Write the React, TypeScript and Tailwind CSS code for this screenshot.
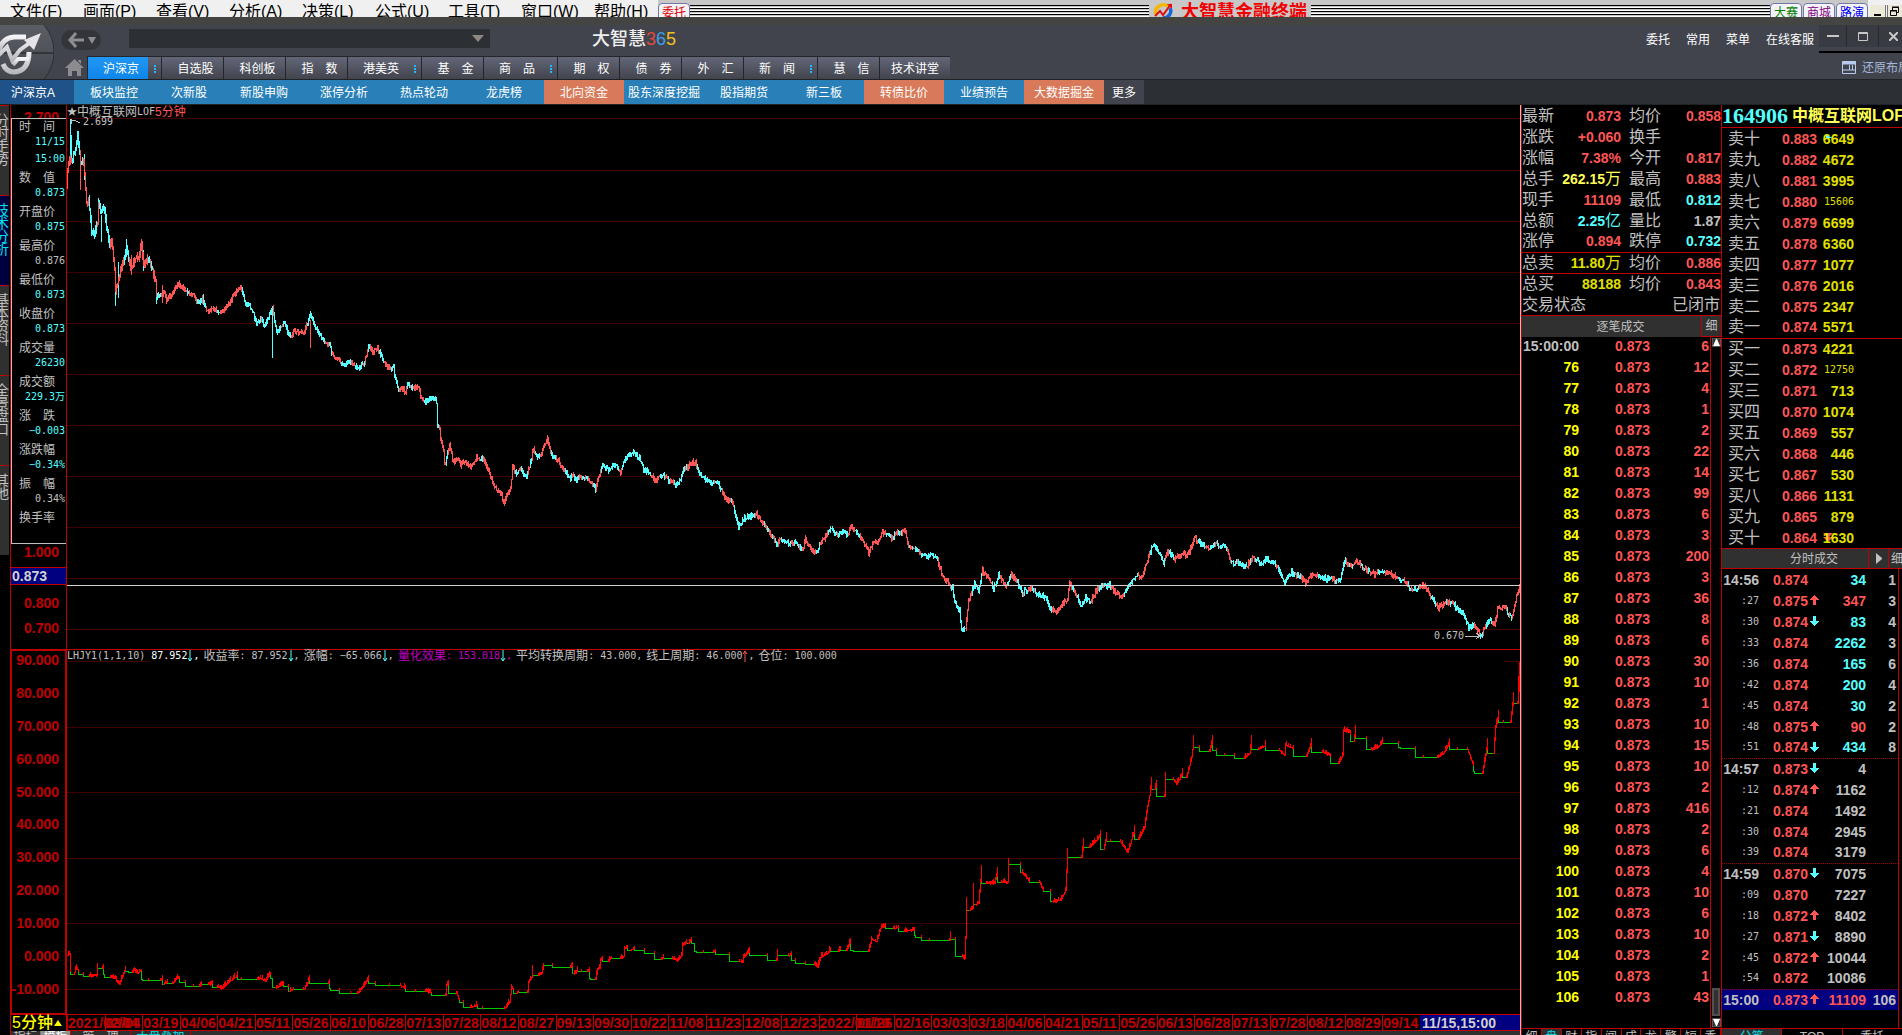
import { useState } from 'react';
import clsx from 'clsx';

const cjk = "font-['Liberation_Sans','Noto_Sans_CJK_SC',sans-serif]";
const mono = "font-['DejaVu_Sans_Mono','Noto_Sans_CJK_SC',monospace]";

const menus = ['文件(F)', '画面(P)', '查看(V)', '分析(A)', '决策(L)', '公式(U)', '工具(T)', '窗口(W)', '帮助(H)'];

const tabs = [
    { name: '沪深京', dots: true },
    { name: '自选股' },
    { name: '科创板' },
    { name: '指　数' },
    { name: '港美英', dots: true },
    { name: '基　金' },
    { name: '商　品', dots: true },
    { name: '期　权' },
    { name: '债　券' },
    { name: '外　汇' },
    { name: '新　闻', dots: true },
    { name: '慧　信' },
    { name: '技术讲堂' },
];

const subTabs = ['板块监控', '次新股', '新股申购', '涨停分析', '热点轮动', '龙虎榜', '北向资金', '股东深度挖掘', '股指期货', '新三板', '转债比价', '业绩预告', '大数据掘金'];
const hotTabs = ['北向资金', '转债比价', '大数据掘金'];

const sideTabs = ['分时走势', '技术分析', '基本资料', '全景盘口', '其他'];

const info = [
    { label: '时　间', values: ['11/15', '15:00'] },
    { label: '数　值', values: ['0.873'] },
    { label: '开盘价', values: ['0.875'] },
    { label: '最高价', values: ['0.876'], grey: true },
    { label: '最低价', values: ['0.873'] },
    { label: '收盘价', values: ['0.873'] },
    { label: '成交量', values: ['26230'] },
    { label: '成交额', values: ['229.3万'] },
    { label: '涨　跌', values: ['−0.003'] },
    { label: '涨跌幅', values: ['−0.34%'] },
    { label: '振　幅', values: ['0.34%'], grey: true },
    { label: '换手率', values: [] },
];

const dates = [
    '2021/02/04', '03/04', '03/19', '04/06', '04/21', '05/11', '05/26', '06/10', '06/28', '07/13', '07/28', '08/12',
    '08/27', '09/13', '09/30', '10/22', '11/08', '11/23', '12/08', '12/23', '2022/01/10', '01/26', '02/16', '03/03',
    '03/18', '04/06', '04/21', '05/11', '05/26', '06/13', '06/28', '07/13', '07/28', '08/12', '08/29', '09/14',
];

const RED = 'text-[#ff5555]';
const CYAN = 'text-[#55ffff]';
const YELLOW = 'text-[#e0e000]';
const GREY = 'text-[#c0c0c0]';

const summary = [
    ['最新', '0.873', RED, '均价', '0.858', RED],
    ['涨跌', '+0.060', RED, '换手', '', RED],
    ['涨幅', '7.38%', RED, '今开', '0.817', RED],
    ['总手', '262.15万', 'text-[#ffff55]', '最高', '0.883', RED],
    ['现手', '11109', RED, '最低', '0.812', CYAN],
    ['总额', '2.25亿', CYAN, '量比', '1.87', GREY],
    ['涨停', '0.894', RED, '跌停', '0.732', CYAN],
    ['总卖', '11.80万', YELLOW, '均价', '0.886', RED],
    ['总买', '88188', YELLOW, '均价', '0.843', RED],
];

const tickVolumes = [6, 12, 4, 1, 2, 22, 14, 99, 6, 3, 200, 3, 36, 8, 6, 30, 10, 1, 10, 15, 10, 2, 416, 2, 6, 4, 10, 6, 10, 2, 1, 43];

const sells = [
    ['卖十', '0.883', '6649'], ['卖九', '0.882', '4672'], ['卖八', '0.881', '3995'], ['卖七', '0.880', '15606'],
    ['卖六', '0.879', '6699'], ['卖五', '0.878', '6360'], ['卖四', '0.877', '1077'], ['卖三', '0.876', '2016'],
    ['卖二', '0.875', '2347'], ['卖一', '0.874', '5571'],
];
const buys = [
    ['买一', '0.873', '4221'], ['买二', '0.872', '12750'], ['买三', '0.871', '713'], ['买四', '0.870', '1074'],
    ['买五', '0.869', '557'], ['买六', '0.868', '446'], ['买七', '0.867', '530'], ['买八', '0.866', '1131'],
    ['买九', '0.865', '879'], ['买十', '0.864', '1630'],
];

// time, price, direction, volume, volume colour, count
const trades = [
    ['14:56', '0.874', '', '34', CYAN, '1'],
    [':27', '0.875', 'up', '347', RED, '3'],
    [':30', '0.874', 'down', '83', CYAN, '4'],
    [':33', '0.874', '', '2262', CYAN, '3'],
    [':36', '0.874', '', '165', CYAN, '6'],
    [':42', '0.874', '', '200', CYAN, '4'],
    [':45', '0.874', '', '30', CYAN, '2'],
    [':48', '0.875', 'up', '90', RED, '2'],
    [':51', '0.874', 'down', '434', CYAN, '8'],
    ['14:57', '0.873', 'down', '4', GREY, ''],
    [':12', '0.874', 'up', '1162', GREY, ''],
    [':21', '0.874', '', '1492', GREY, ''],
    [':30', '0.874', '', '2945', GREY, ''],
    [':39', '0.874', '', '3179', GREY, ''],
    ['14:59', '0.870', 'down', '7075', GREY, ''],
    [':09', '0.870', '', '7227', GREY, ''],
    [':18', '0.872', 'up', '8402', GREY, ''],
    [':27', '0.871', 'down', '8890', GREY, ''],
    [':45', '0.872', 'up', '10044', GREY, ''],
    [':54', '0.872', '', '10086', GREY, ''],
    ['15:00', '0.873', 'up', '11109', RED, '106'],
];

const priceData =
    '66,185 67,172 69,158 72,158 75,150 77,133 80,163 83,160 86,203 88,197 91,232 94,232 97,223 98,202 101,210 104,207 106,227 109,247 111,240 114,270 115,292 117,283 119,273 122,263 126,247 129,263 131,267 135,258 138,257 141,243 143,265 148,257 153,273 155,280 156,297 163,293 166,300 170,295 178,283 185,290 194,297 198,303 202,298 205,308 208,312 212,307 218,313 225,307 230,300 239,287 242,292 245,302 252,310 256,324 260,318 264,325 272,309 274,320 277,333 283,323 290,335 294,330 303,334 310,313 314,327 319,335 326,344 330,345 331,352 339,360 346,365 349,361 357,367 364,362 368,345 373,351 376,347 381,355 387,367 393,368 395,380 398,390 401,387 405,393 407,385 415,387 418,388 421,397 427,402 431,397 436,402 437,425 439,430 440,440 443,450 444,465 447,453 449,445 453,462 457,458 460,465 464,460 471,468 474,460 477,457 483,459 488,470 491,480 495,488 500,493 503,502 506,495 510,488 512,467 516,475 520,468 526,477 530,463 533,448 536,457 541,452 547,438 551,455 555,457 560,463 564,470 570,478 572,475 576,478 579,475 586,478 589,480 595,488 598,477 602,465 608,470 613,463 620,472 625,457 634,452 639,457 643,468 649,472 655,480 663,475 671,483 678,483 684,468 692,462 695,462 699,473 703,477 711,483 717,482 724,497 731,502 734,510 738,526 745,517 756,513 763,523 771,535 777,543 779,537 787,542 795,543 802,550 805,539 810,548 815,553 820,543 827,533 831,526 835,535 842,532 847,535 851,526 858,535 864,543 868,552 872,543 877,543 882,532 891,537 897,532 905,530 908,547 914,547 922,554 936,556 941,573 949,585 952,587 954,602 959,610 961,628 965,627 968,600 974,583 978,590 982,570 988,578 993,587 998,575 1005,587 1011,573 1017,583 1022,592 1031,587 1036,594 1045,597 1049,607 1056,612 1062,603 1067,600 1069,582 1076,595 1081,607 1085,597 1090,602 1096,590 1102,585 1109,585 1121,597 1125,590 1130,583 1136,575 1140,578 1146,565 1152,545 1158,552 1163,563 1167,550 1174,558 1182,553 1187,555 1194,537 1200,543 1208,548 1215,542 1219,547 1225,545 1229,558 1234,563 1237,560 1244,567 1252,558 1261,563 1267,559 1275,563 1280,573 1284,583 1290,572 1298,575 1305,582 1313,573 1325,578 1339,580 1344,560 1351,567 1356,560 1364,568 1375,574 1383,570 1393,575 1404,582 1412,589 1424,585 1430,595 1437,608 1444,602 1452,603 1460,612 1465,617 1468,627 1474,624 1480,636 1486,625 1490,620 1494,624 1497,607 1505,608 1511,618 1515,600 1520,583';

// g marks a stretch that steps to its level and holds it
const yieldData =
    '67,955 69,953 70,970 73,974g 76,967 78,971 83,974g 89,976g 96,975 97,963 102,968g 103,966 104,974g 110,977g 115,978 119,984 125,967 128,971g 132,972g 133,969 137,973 141,969 142,979g 148,980g 160,980g 162,977 163,984g 167,981 172,983g 177,977 179,979 185,982g 193,986g 199,986g 201,983 208,984g 212,983 217,987g 222,988 228,982 237,975 241,979g 257,979g 258,977 265,981 270,972 272,978g 275,987g 277,987 283,983 288,986g 289,991g 293,988 303,989g 306,985 309,978 311,983g 328,983g 329,981 330,988g 339,990g 350,993g 357,993g 362,987 368,978 375,983g 389,985g 400,985g 405,988 415,991g 425,991g 431,992 433,995g 445,995g 446,985 448,983 450,993g 456,993g 459,1000 463,1002g 470,1007g 477,1005 482,1008g 504,1008g 509,1002 511,986 513,990 516,993g 518,990 527,992g 528,982 531,977 532,967 534,975g 538,975g 541,973 543,965 552,965g 570,967g 572,964 573,973g 575,973 577,968 581,971g 587,971g 589,970 590,978g 595,979g 597,968 599,968 600,960 602,957 604,961g 608,961g 611,956 613,958g 620,958g 623,956 624,948 627,947 630,950g 634,947 637,950g 644,950g 647,953g 654,953g 657,959g 661,959g 663,957 664,958g 672,958g 677,960 681,955 682,945 686,942 688,943g 691,939 694,943g 696,951g 703,952g 713,952g 715,950 717,954g 729,954g 731,961g 739,961g 742,962 743,957 749,951 751,955g 767,955g 768,960g 776,960g 777,951 779,955g 788,955g 791,954 795,960g 805,963g 814,964g 817,967 820,957 827,953 830,949 838,951g 840,946 842,950g 846,950g 850,941 853,950g 868,951g 871,939 876,941 880,928 885,925 893,928g 898,927 904,931g 914,929 915,935g 921,937g 929,940g 949,940g 950,933 955,939g 956,956g 962,956g 964,958 965,938 966,902 969,910g 972,908 973,888 975,904g 978,903 981,870 986,883g 994,883 997,872 1001,882g 1007,882 1008,863 1020,864g 1021,872g 1029,880 1039,882g 1043,889 1050,891g 1052,901g 1060,900 1065,890 1067,853 1070,857g 1081,857g 1083,843 1089,847g 1094,842 1100,835 1103,849g 1106,837 1110,841g 1120,841g 1127,852 1134,830 1138,839g 1144,827 1146,812 1149,795 1151,782 1154,789g 1156,785 1157,796g 1164,796g 1165,777 1173,779g 1176,784 1182,773 1186,777g 1191,757 1193,740 1199,747g 1209,751g 1212,740 1216,750g 1224,755g 1234,755g 1244,758g 1249,753 1251,740 1258,749g 1265,745 1267,750g 1279,750g 1284,755 1285,745 1293,748 1294,756g 1306,756g 1311,743 1322,752g 1330,755 1338,763g 1342,755 1343,729 1350,733 1353,741g 1355,730 1366,738g 1371,749g 1376,748 1382,742 1398,743g 1400,747g 1415,748g 1423,757g 1437,757g 1443,753 1449,743 1457,749g 1467,749g 1473,765 1474,771g 1482,773g 1487,743 1490,753g 1493,753g 1495,727 1498,715 1503,722g 1510,722g 1513,697 1517,703g 1519,667 1520,662';

const parse = (data: string) =>
    data.split(' ').map((p) => {
        const [x, y] = p.replace('g', '').split(',').map(Number);
        return { x, y, flat: p.endsWith('g') };
    });

const makeRandom = (seed: number) => {
    let s = seed;
    return () => {
        s = (s * 1103515245 + 12345) % 2147483648;
        return s / 2147483648;
    };
};

const buildPrice = () => {
    const rand = makeRandom(7);
    const pts = parse(priceData);
    let up = '';
    let down = '';
    let rising = true;
    let prev = pts[0].y;
    for (let i = 1; i < pts.length; i++) {
        const a = pts[i - 1];
        const b = pts[i];
        for (let x = a.x + 1; x <= b.x; x++) {
            const wild = x < 160 ? 9 : 5;
            const y = Math.round(a.y + ((b.y - a.y) * (x - a.x)) / (b.x - a.x) + (rand() - 0.5) * 4);
            if (rand() < 0.35) rising = rand() < (b.y < a.y ? 0.6 : 0.4);
            const top = Math.min(y, prev) - Math.round(rand() * wild * 0.5);
            const bottom = Math.max(y, prev) + Math.round(rand() * wild * 0.5) + 1;
            if (rising) up += `M${x} ${top}V${bottom}`;
            else down += `M${x} ${top}V${bottom}`;
            prev = y;
        }
    }
    up += 'M80 150V190M310 320V348M131 255V275M162 285V303';
    down += 'M70 119V162M71 135V160M101 215V242M115 280V306M118 262V298M143 250V271M156 285V304M272 309V358M126 239V255M98 198V210M84 154V180';
    return { up, down };
};

const buildYield = () => {
    const rand = makeRandom(21);
    const pts = parse(yieldData);
    let red = '';
    let green = '';
    for (let i = 1; i < pts.length; i++) {
        const a = pts[i - 1];
        const b = pts[i];
        if (b.flat) {
            green += `M${a.x} ${a.y}V${b.y}H${b.x}`;
            if (b.x - a.x > 3) red += `M${b.x} ${b.y - 2}V${b.y + 1}`;
            continue;
        }
        red += `M${a.x} ${a.y}`;
        for (let x = a.x + 1; x <= b.x; x++) {
            const y = Math.round(a.y + ((b.y - a.y) * (x - a.x)) / (b.x - a.x));
            red += `H${x}V${y - Math.round(rand() * 4)}V${y + Math.round(rand() * 2)}V${y}`;
        }
        // overshoot at the peak before a drop
        if (b.x > 960 && pts[i + 1]?.flat && b.y < a.y) red += `M${b.x} ${b.y}V${b.y - 5}`;
    }
    return { red, green };
};

const price = buildPrice();
const yields = buildYield();

const Arrow = ({ dir }: { dir: string }) => (
    <svg width="9" height="11" viewBox="0 0 9 11" className="inline-block shrink-0" shapeRendering="crispEdges">
        {dir === 'up' && <path d="M4 0h1l4 5H6v5H3V5H0z" fill="#ff5555" />}
        {dir === 'down' && <path d="M3 0h3v5h3L5 10H4L0 5h3z" fill="#55ffff" />}
    </svg>
);

const ThinArrow = ({ up }: { up?: boolean }) => (
    <svg width="6" height="12" viewBox="0 0 6 12" className="shrink-0" fill="none" stroke={up ? '#ff5555' : '#55ffff'}>
        {up ? <path d="M3 12V1M1 4l2-3 2 3" /> : <path d="M3 0v11M1 8l2 3 2-3" />}
    </svg>
);

const MenuBar = () => (
    <div className="flex h-[17px] shrink-0 overflow-hidden bg-[#c8c8c8]">
        <nav className="flex w-[658px] items-start bg-[#f0f0f0] pl-2.5">
            {menus.map((m) => (
                <button key={m} className="w-[73px] shrink-0 whitespace-nowrap text-left text-base leading-6 text-black">{m}</button>
            ))}
        </nav>
        <button className="mt-[3px] h-5 w-8 shrink-0 rounded-t-sm border border-[#7078a8] bg-[#f4f4f8] text-xs leading-4 text-[#e00000]">委托</button>
        <div className="mt-[5px] h-3 flex-1 bg-[repeating-linear-gradient(#000_0_1px,#c8c8c8_1px_2px,#fff_2px_3px)]" />
        <div className="flex items-start gap-2 px-1 pt-0.5">
            <svg width="20" height="18" viewBox="0 0 20 18" fill="none">
                <path d="M3 12A8 7 0 0 1 15 4" stroke="#f5b800" strokeWidth="3.5" />
                <path d="M17 6A8 7 0 0 1 10 16" stroke="#1668d8" strokeWidth="3.5" />
                <path d="M2 14l5-5 3 4 8-11" stroke="#e01010" strokeWidth="2" />
                <path d="M14 2h5v5z" fill="#e01010" />
            </svg>
            <span className="text-lg font-bold leading-5 text-[#f00000]">大智慧金融终端</span>
        </div>
        <div className="mt-[5px] h-3 flex-1 bg-[repeating-linear-gradient(#000_0_1px,#c8c8c8_1px_2px,#fff_2px_3px)]" />
        <div className="flex gap-px pt-[3px]">
            <button className="h-5 w-8 rounded-t-sm border border-[#7078a8] bg-[#f4f4f8] text-xs leading-4 text-[#008000]">大赛</button>
            <button className="h-5 w-8 rounded-t-sm border border-[#7078a8] bg-[#f4f4f8] text-xs leading-4 text-[#800080]">商城</button>
            <button className="h-5 w-8 rounded-t-sm border border-[#7078a8] bg-[#f4f4f8] text-xs leading-4 text-[#0000f0]">路演</button>
        </div>
        <div className="flex w-[34px] shrink-0 gap-px bg-[#f0f0f0] pl-0.5 pt-[5px]">
            <button aria-label="最小化子窗口" className="flex h-5 w-4 justify-center border-r border-[#777] bg-[#ece9d8]">
                <svg width="9" height="12" viewBox="0 0 9 12"><path d="M1 9h7v2H1z" fill="#000" /></svg>
            </button>
            <button aria-label="还原子窗口" className="flex h-5 w-4 justify-center border-l border-[#777] bg-[#ece9d8]">
                <svg width="11" height="12" viewBox="0 0 11 12" fill="none" stroke="#000"><path d="M3.5 5V2.5h6v5H7M3 2h7M1.5 5.5h6v5h-6zM1 6h7" /></svg>
            </button>
        </div>
    </div>
);

const Logo = () => (
    <svg width="54" height="54" viewBox="0 0 54 54" className="shrink-0">
        <defs>
            <linearGradient id="disc" x1="0" y1="0" x2="0" y2="1">
                <stop offset="0" stopColor="#5c5e66" />
                <stop offset="1" stopColor="#44464e" />
            </linearGradient>
            <linearGradient id="silver" x1="0" y1="0" x2="0" y2="1">
                <stop offset="0" stopColor="#f4f4f6" />
                <stop offset="1" stopColor="#b8b8be" />
            </linearGradient>
        </defs>
        <path d="M0 0H44Q54 12 54 27T44 54H0z" fill="url(#disc)" />
        <path d="M44 0Q54 12 54 27T44 54" fill="none" stroke="#2c2e34" />
        <path d="M0 28H54" stroke="#33353b" strokeWidth="2" />
        <g fill="none" stroke="url(#silver)">
            <path d="M-1 26Q2 13 14 12H26" strokeWidth="5" />
            <path d="M-2 31L7 22L12 35L20 25L35 14" strokeWidth="4" />
            <path d="M29 27Q29 46 14 47Q6 47 3 39" strokeWidth="5" />
            <path d="M13 40L18 34H29" strokeWidth="4" />
        </g>
        <path d="M41 8L24 15L34 25z" fill="#e4e4e8" />
    </svg>
);

const Header = () => {
    const [active, setActive] = useState('沪深京');
    return (
        <header className="flex h-[62px] shrink-0 flex-col border-t-8 border-[#444442] bg-[#41444c] text-white">
            <div className="flex h-[54px]">
                <Logo />
                <div className="flex min-w-0 flex-1 flex-col">
                    <div className="flex h-[31px] items-start">
                        <button aria-label="后退" className="ml-[7px] mt-[5px] flex h-5 w-10 items-center justify-center gap-1 rounded-full bg-[#33353a]">
                            <svg width="17" height="16" viewBox="0 0 17 16" fill="none" stroke="#8e8e92" strokeWidth="3"><path d="M9 1L3 8l6 7M3 8h14" /></svg>
                            <svg width="8" height="8" viewBox="0 0 8 8"><path d="M0 1h8L4 8z" fill="#8e8e92" /></svg>
                        </button>
                        <div className="ml-7 mt-1 flex h-[19px] w-[361px] items-center bg-[#2c3034] pr-1.5">
                            <input aria-label="搜索" className="h-full min-w-0 flex-1 bg-transparent px-1 text-xs outline-none" />
                            <svg width="12" height="7" viewBox="0 0 12 7"><path d="M0 0h12L6 7z" fill="#8e8680" /></svg>
                        </div>
                        <h1 className="ml-[102px] mt-0.5 text-lg font-medium leading-6 text-[#eeeeee]">
                            大智慧<span className="text-[#e04a3c]">3</span><span className="text-[#3aa0e8]">6</span><span className="text-[#f0c020]">5</span>
                        </h1>
                        <div className="ml-auto flex gap-4 pr-[5px] pt-1.5 text-xs leading-[18px]">
                            <button>委托</button>
                            <button>常用</button>
                            <button>菜单</button>
                            <button>在线客服</button>
                        </div>
                        <div className="flex h-7 w-[83px] shrink-0 overflow-hidden border-b-2 border-black">
                            <button aria-label="最小化" className="flex h-[22px] w-7 shrink-0 items-center justify-center border-r border-[#26282c] bg-[#383b41]">
                                <svg width="12" height="3"><path d="M0 0h12v2H0z" fill="#c8c8c8" /></svg>
                            </button>
                            <button aria-label="最大化" className="flex h-[22px] w-8 shrink-0 items-center justify-center border-r border-[#26282c] bg-[#383b41]">
                                <svg width="10" height="9" viewBox="0 0 10 9" fill="none" stroke="#c8c8c8"><path d="M.5 .5h9v8h-9zM0 1.5h10" /></svg>
                            </button>
                            <button aria-label="关闭" className="flex h-[22px] w-7 shrink-0 items-center justify-center bg-[#383b41]">
                                <svg width="9" height="9" viewBox="0 0 9 9" stroke="#c8c8c8" strokeWidth="2"><path d="M0 0l9 9M9 0L0 9" /></svg>
                            </button>
                        </div>
                    </div>
                    <div className="flex h-[23px] items-stretch">
                        <button aria-label="首页" className="ml-2 flex w-[25px] items-center justify-center">
                            <svg width="19" height="17" viewBox="0 0 19 17" fill="#8c8c90"><path d="M9.500 0l9.500 9h-3v8h-4v-5H7v5H3V9H0zM13 1h3v4l-3-3z" /></svg>
                        </button>
                        {tabs.map((t) => (
                            <div key={t.name} className="flex border-l border-t border-[#24262a] bg-linear-to-b from-[#636677] to-[#42454d]">
                                <button
                                    onClick={() => setActive(t.name)}
                                    className={clsx(
                                        'whitespace-nowrap text-center text-xs leading-6',
                                        t.name === '技术讲堂' ? 'w-[70px]' : t.dots ? 'w-[60px] pl-1.5' : 'w-[61px] pl-1.5',
                                        t.name === active && 'bg-linear-to-b from-[#2196f3] to-[#0c86ea]'
                                    )}
                                >
                                    {t.name}
                                </button>
                                {t.dots && (
                                    <span className="flex w-[13px] flex-col items-center justify-center gap-px pt-px">
                                        <i className="size-0.5 bg-[#20b8ff]" />
                                        <i className="size-0.5 bg-[#20b8ff]" />
                                        <i className="size-0.5 bg-[#20b8ff]" />
                                    </span>
                                )}
                            </div>
                        ))}
                        <button className="ml-auto flex w-[60px] shrink-0 items-center gap-1.5 overflow-hidden whitespace-nowrap text-xs text-[#a8b8dc]">
                            <svg width="14" height="13" viewBox="0 0 14 13" className="shrink-0" fill="none" stroke="#b8cbee">
                                <path d="M.5 .5h13v12H.5zM1 9h12M7.500 4v5M10.500 4v5" /><path d="M0 2h14" strokeWidth="3" />
                            </svg>
                            还原布局
                        </button>
                    </div>
                </div>
            </div>
        </header>
    );
};

const SubNav = () => (
    <nav className="flex h-[26px] shrink-0 border-y border-[#202326] bg-[#2c2f33] text-xs text-white">
        <button className="w-[74px] bg-[#1f5289] pr-2 pt-0.5">沪深京A</button>
        {subTabs.map((t) => (
            <button key={t} className={clsx('whitespace-nowrap pt-0.5', t === '次新股' ? 'w-[70px]' : 'w-20', hotTabs.includes(t) ? 'bg-[#d87a59]' : 'bg-[#2980b9]')}>
                {t}
            </button>
        ))}
        <button className="w-10 bg-[#41444c] pt-0.5">更多</button>
    </nav>
);

const SideTabs = () => (
    <aside className="flex w-2.5 shrink-0 flex-col overflow-hidden">
        {sideTabs.map((t, i) => (
            <button
                key={t}
                className={clsx(
                    'flex h-[90px] w-[9px] shrink-0 justify-end overflow-hidden border-t border-[#c00000] pt-2 text-sm leading-[13px]',
                    i === 1 ? 'bg-[#000040] text-[#00e0e8]' : 'bg-[#303030] text-[#c0c0c0]'
                )}
            >
                <span className="w-3.5 shrink-0">{t.split('').map((c, k) => <span key={k} className="block">{c}</span>)}</span>
            </button>
        ))}
    </aside>
);

const InfoBox = () => (
    <section className="absolute left-0 top-[13px] flex h-[426px] w-14 flex-col gap-1 border border-[#c0c0c0] bg-black font-normal">
        {info.map((row) => (
            <dl key={row.label}>
                <dt className="pl-[7px] text-xs leading-4 text-[#c0c0c0]">{row.label}</dt>
                {row.values.map((v, i) => (
                    <dd key={v} className={clsx('pr-px text-right text-[10px] leading-[14px]', mono, i > 0 && 'mt-[3px]', row.grey ? GREY : CYAN)}>{v}</dd>
                ))}
            </dl>
        ))}
    </section>
);

const PriceChart = () => (
    <div className="relative min-h-0 min-w-0 border-b border-[#c00000]">
        <svg className="block h-full w-full" viewBox="67 105 1453 544" preserveAspectRatio="none" shapeRendering="crispEdges" fill="none">
            <g stroke="#400000">
                {[118, 170, 221, 272, 323, 374, 425, 476, 527, 578, 629].map((y) => <path key={y} d={`M67 ${y}H1520`} />)}
            </g>
            <path d={price.down} stroke="#55ffff" />
            <path d={price.up} stroke="#ff5555" />
            <path d="M67 585H1520" stroke="#d0d0d0" />
            <path d="M71 120L76 121L80 123M71 119v5M1465 636h15m-4-3l4 3-4 3" stroke="#c0c0c0" />
        </svg>
        <div className="absolute left-0 top-0 flex text-xs leading-[14px] text-[#c0c0c0]">
            <span className="text-[10px]">★</span>中概互联网<span className={clsx('text-[10px]', mono)}>LOF</span><span className={RED}>5分钟</span>
        </div>
        <span className={clsx('absolute left-4 top-[11px] text-[10px] leading-3 text-[#c0c0c0]', mono)}>2.699</span>
        <span className={clsx('absolute bottom-[7px] right-14 text-[10px] leading-3 text-[#c0c0c0]', mono)}>0.670</span>
    </div>
);

const Param = ({ label, value, up, last }: { label?: string; value: string; up?: boolean; last?: boolean }) => (
    <span className="flex items-center">
        {label && <span className="text-xs leading-3">{label}</span>}
        {label && <span className="pr-1.5">:</span>}
        <span>{value}</span>
        {!last && value !== '43.000' && <ThinArrow up={up} />}
        {!last && <span className="pr-1">,</span>}
    </span>
);

const YieldChart = () => (
    <div className="relative min-h-0 min-w-0 border-b border-[#c00000]">
        <svg className="block h-full w-full" viewBox="67 650 1453 364" preserveAspectRatio="none" shapeRendering="crispEdges" fill="none">
            <g stroke="#400000">
                {[727, 792, 858, 923, 989].map((y) => <path key={y} d={`M67 ${y}H1520`} />)}
                <path d="M67 661H150M1504 661H1520" />
            </g>
            <path d={yields.green} stroke="#00c800" />
            <path d={yields.red} stroke="#ff0000" />
            <path d="M1519 662V692M1518 676V695" stroke="#ff0000" />
        </svg>
        <div className={clsx('absolute left-0 top-0 flex whitespace-nowrap text-[10px] leading-3 text-[#c0c0c0]', mono)}>
            <span className="pr-1.5">LHJY1(1,1,10)</span>
            <span className="text-white"><Param value="87.952" /></span>
            <Param label="收益率" value="87.952" />
            <Param label="涨幅" value="−65.066" />
            <span className="text-[#c000c0]"><Param label="量化效果" value="153.018" /></span>
            <Param label="平均转换周期" value="43.000" />
            <Param label="线上周期" value="46.000" up />
            <Param label="仓位" value="100.000" last />
        </div>
    </div>
);

const ChartArea = () => (
    <main className="grid min-w-0 flex-1 grid-cols-[57px_minmax(0,1fr)] grid-rows-[545fr_365fr_16px_4px] border-r border-[#c0c0c0]">
        <div className="relative flex flex-col items-end overflow-hidden border-x border-b border-[#c00000] pb-[13px] text-sm font-bold text-[#c00000]">
            <span className="pr-[7px] pt-1 leading-4">2.700</span>
            <span className="mb-[7px] mt-auto pr-[7px] leading-4">1.000</span>
            <span className="mb-2.5 h-[18px] w-full border-y border-[#c00000] bg-[#000080] pl-px leading-4 text-[#d0d0d0]">0.873</span>
            <span className="mb-[9px] pr-[7px] leading-4">0.800</span>
            <span className="pr-[7px] leading-4">0.700</span>
            <InfoBox />
        </div>
        <PriceChart />
        <div className="flex flex-col items-end justify-between border-x-2 border-b-2 border-t border-[#c00000] pb-4 pr-1.5 pt-px text-sm font-bold leading-4 text-[#c00000]">
            {[90, 80, 70, 60, 50, 40, 30, 20, 10, 0].map((n) => <span key={n}>{n}.000</span>)}
            <span>-10.000</span>
        </div>
        <YieldChart />
        <button className="flex items-center whitespace-nowrap border-x border-[#c00000] pl-px text-base font-medium leading-4 text-[#ffff00]">
            5分钟
            <svg width="8" height="6" viewBox="0 0 8 6" className="ml-px"><path d="M4 0l4 6H0z" fill="#ffff00" /></svg>
        </button>
        <div className="flex overflow-hidden border-b border-[#c00000]">
            <div className="flex min-w-0 flex-1 overflow-hidden text-sm font-bold leading-4 text-[#c00000]">
                {dates.map((d, i) => (
                    <span key={i} className="min-w-0 flex-1 whitespace-nowrap border-l border-[#c00000]">{d}</span>
                ))}
            </div>
            <span className="w-[100px] shrink-0 bg-[#000080] pl-0.5 text-sm font-bold leading-4 text-[#d0d0d0]">11/15,15:00</span>
        </div>
        <div className="col-span-2 flex overflow-hidden border-l border-[#c00000] bg-[#303030] text-xs leading-3 text-[#c0c0c0]">
            <button className="w-[30px] border-r border-[#777]">指标</button>
            <button className="w-[30px] border-r border-[#c00000] bg-[#909090] text-white">模板</button>
            <button className="w-[60px] border-r border-[#c00000]">管　理</button>
            <button className="w-[60px] border-r border-[#c00000] text-[#00e0e8]">大盘叠加</button>
        </div>
    </main>
);

const QuotePanel = () => (
    <section className="flex w-[200px] shrink-0 flex-col border-l border-[#c00000]">
        <table className="w-full table-fixed border-collapse">
            <colgroup><col className="w-9" /><col /><col className="w-[41px]" /><col className="w-[59px]" /></colgroup>
            <tbody>
                {summary.map((r, i) => (
                    <tr key={i} className={clsx('h-[21px]', i >= 7 && 'border-t border-[#c00000]')}>
                        <th className="whitespace-nowrap p-0 text-left text-base font-normal leading-5 text-[#c0c0c0]">{r[0]}</th>
                        <td className={clsx('whitespace-nowrap p-0 text-right text-sm font-bold leading-5', r[2])}>
                            {r[1].replace(/[万亿]/, '')}
                            {/[万亿]/.test(r[1]) && <span className="text-base font-normal leading-4">{r[1].slice(-1)}</span>}
                        </td>
                        <th className="whitespace-nowrap p-0 pl-2 text-left text-base font-normal leading-5 text-[#c0c0c0]">{r[3]}</th>
                        <td className={clsx('whitespace-nowrap p-0 text-right text-sm font-bold leading-5', r[5])}>{r[4]}</td>
                    </tr>
                ))}
            </tbody>
        </table>
        <div className="flex h-[21px] justify-between pr-px text-base leading-[21px] text-[#c0c0c0]"><span>交易状态</span><span>已闭市</span></div>
        <div className="flex h-[22px] border-t border-[#c00000] bg-[#303030] text-xs text-[#c0c0c0]">
            <h2 className="flex-1 pl-[18px] text-center leading-[22px]">逐笔成交</h2>
            <button className="w-5 border-b border-l border-[#c00000]">细</button>
        </div>
        <div className="flex min-h-0 flex-1">
            <div className="min-w-0 flex-1">
                <table className="w-full table-fixed border-collapse text-sm font-bold">
                    <colgroup><col className="w-[57px]" /><col className="w-[71px]" /><col /></colgroup>
                    <tbody>
                        {tickVolumes.map((v, i) => (
                            <tr key={i} className="h-[21px] text-right align-top leading-[19px]">
                                <td className={clsx('whitespace-nowrap p-0', i === 0 ? GREY : 'text-[#ffff00]')}>{i === 0 ? '15:00:00' : 75 + i}</td>
                                <td className={clsx('p-0', RED)}>0.873</td>
                                <td className={clsx('p-0 pr-px', RED)}>{v}</td>
                            </tr>
                        ))}
                    </tbody>
                </table>
            </div>
            <div className="flex w-[11px] flex-col items-center border-l border-[#c00000] py-px">
                <button aria-label="向上滚动" className="flex h-[9px] w-[9px] items-center justify-center border border-[#555] bg-[#303030]">
                    <svg width="7" height="7" viewBox="0 0 7 7" className="shrink-0"><path d="M3 0h1l3 7H0z" fill="#fff" /></svg>
                </button>
                <span className="mt-auto h-7 w-2 border-2 border-[#505050] bg-[#303030]" />
                <button aria-label="向下滚动" className="mt-0.5 flex h-[9px] w-[9px] items-center justify-center border border-[#555] bg-[#303030]">
                    <svg width="7" height="7" viewBox="0 0 7 7" className="shrink-0"><path d="M3 7h1l3-7H0z" fill="#fff" /></svg>
                </button>
            </div>
        </div>
        <div className="flex h-[7px] shrink-0 overflow-hidden border-t border-[#c00000] text-xs leading-4 text-[#c0c0c0]">
            {['细', '盘', '财', '指', '闻', '成', '龙', '警', '短', '委'].map((t, i) => (
                <button key={t} className={clsx('flex-1 border-r border-[#c00000]', i === 1 && 'bg-[#303030] text-[#00e0e8]')}>{t}</button>
            ))}
        </div>
    </section>
);

const OrderRows = ({ rows }: { rows: string[][] }) => (
    <>
        {rows.map((r) => (
            <tr key={r[0]} className={clsx('h-[21px]', r[0] === '买一' && 'border-t border-[#c00000]')}>
                <th className="whitespace-nowrap p-0 pl-1.5 text-left text-base font-normal leading-5 text-[#c0c0c0]">{r[0]}</th>
                <td className={clsx('p-0 text-right text-sm font-bold leading-5', RED)}>{r[1]}</td>
                <td className={clsx('relative p-0 text-right', YELLOW, r[2].length === 5 ? ['text-[10px] leading-4', mono] : 'text-sm font-bold leading-5')}>
                    {r[2]}
                    {r[0] === '卖十' && <svg width="10" height="5" viewBox="0 0 10 5" className="absolute left-1.5 top-1.5"><path d="M0 4h3V1l7 3z" fill="#55ffff" /></svg>}
                    {r[0] === '买十' && <svg width="10" height="10" viewBox="0 0 10 10" className="absolute left-1.5 top-1.5 -z-10"><path d="M0 0h10L5 5zM0 4h10l-5 5z" fill="#ff5555" /></svg>}
                </td>
                <td className="p-0" />
            </tr>
        ))}
    </>
);

const DepthPanel = () => (
    <section className="isolate flex w-[181px] shrink-0 flex-col overflow-hidden border-l border-[#c00000]">
        <h2 className="flex h-[23px] shrink-0 items-center gap-1 overflow-hidden whitespace-nowrap border-b border-[#c00000]">
            <span className="font-['Liberation_Serif',serif] text-[22px] font-bold leading-5 text-[#55ffff]">164906</span>
            <span className="text-base font-bold leading-5 text-[#ffff55]">中概互联网LOF</span>
        </h2>
        <table className="w-full table-fixed border-collapse">
            <colgroup><col className="w-[50px]" /><col className="w-[45px]" /><col className="w-[37px]" /><col /></colgroup>
            <tbody>
                <OrderRows rows={sells} />
                <OrderRows rows={buys} />
            </tbody>
        </table>
        <div className="flex h-[21px] shrink-0 border-y border-[#c00000] bg-[#303030] text-xs text-[#c0c0c0]">
            <h2 className="flex-1 pl-[38px] text-center leading-5">分时成交</h2>
            <button aria-label="展开" className="flex w-5 items-center justify-center border-l border-[#c00000]">
                <svg width="6" height="11" viewBox="0 0 6 11"><path d="M0 0l6 5v1l-6 5z" fill="#c0c0c0" /></svg>
            </button>
            <button className="w-3.5 shrink-0 overflow-hidden whitespace-nowrap border-l border-[#c00000] pl-0.5 text-left">细</button>
        </div>
        <div className="flex min-h-0 flex-1">
            <div className="min-w-0 flex-1">
                <table className="w-full table-fixed border-collapse text-sm font-bold">
                    <colgroup><col className="w-[37px]" /><col className="w-[60px]" /><col className="w-[47px]" /><col /></colgroup>
                    <tbody>
                        {trades.map((t, i) => (
                            <tr key={i} className={clsx('h-[21px] text-right leading-5', i > 0 && t[0].length === 5 && 'border-t border-dotted border-[#a00000]', i === 20 && 'bg-[#000080]')}>
                                <td className={clsx('p-0', GREY, t[0].length === 3 && ['text-[10px] font-normal', mono])}>{t[0]}</td>
                                <td className={clsx('p-0', RED)}>
                                    <span className="flex items-center justify-end gap-0.5">{t[1]}<Arrow dir={t[2]} /></span>
                                </td>
                                <td className={clsx('p-0', t[4])}>{t[3]}</td>
                                <td className={clsx('p-0 pr-0.5', GREY)}>{t[5]}</td>
                            </tr>
                        ))}
                    </tbody>
                </table>
            </div>
            <div className="w-1 border-l border-[#c00000]" />
        </div>
        <div className="flex h-[7px] shrink-0 overflow-hidden border-t border-[#c00000] text-xs leading-4 text-[#c0c0c0]">
            <button className="flex-1 bg-[#303030] text-[#00e0e8]">分笔</button>
            <button className="flex-1 border-l border-[#c00000]">TOP</button>
            <button className="flex-1 border-l border-[#c00000]">委托</button>
        </div>
    </section>
);

const App = () => (
    <div className={clsx('flex h-screen flex-col overflow-hidden bg-black', cjk)}>
        <MenuBar />
        <Header />
        <SubNav />
        <div className="flex min-h-0 flex-1">
            <SideTabs />
            <ChartArea />
            <QuotePanel />
            <DepthPanel />
        </div>
    </div>
);

export default App;
